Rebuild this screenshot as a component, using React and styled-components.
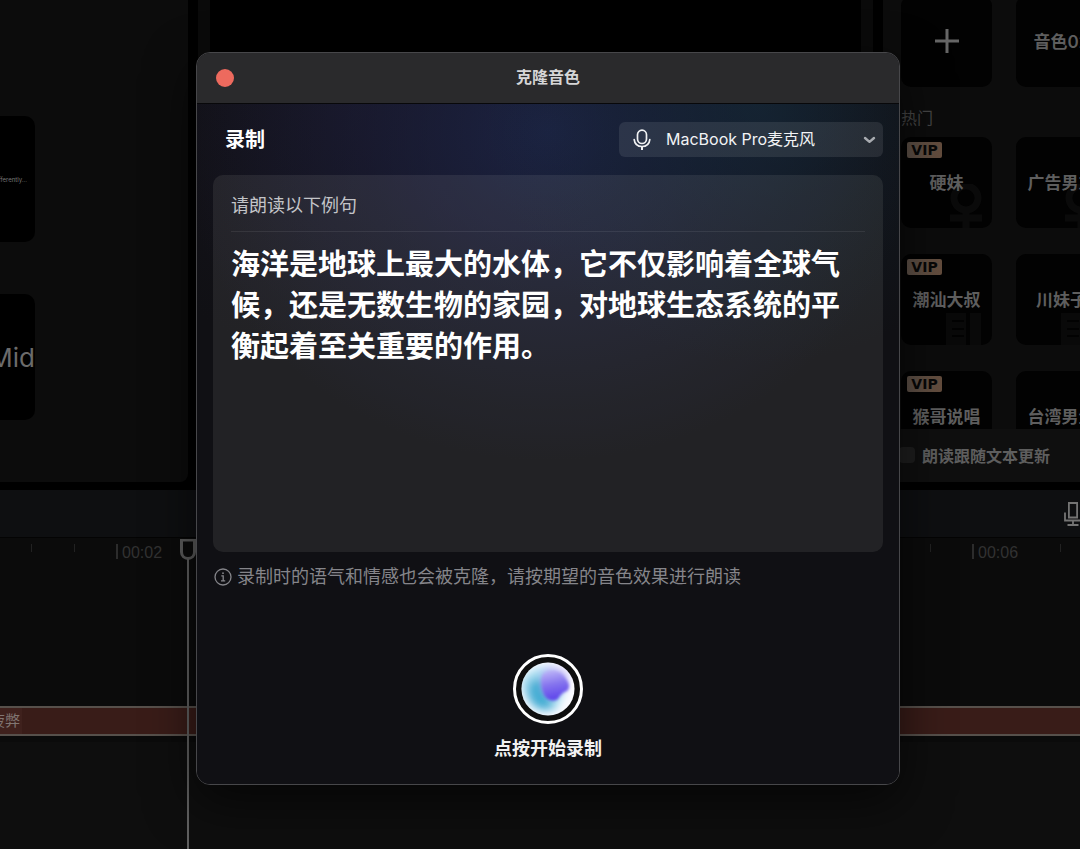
import { useState } from 'react'
import styled, { createGlobalStyle, css } from 'styled-components'

const GlobalStyle = createGlobalStyle`
  * {
    box-sizing: border-box;
  }
  body {
    margin: 0;
    background: #000;
    color: #fff;
    font-family: Inter, 'Noto Sans CJK SC', sans-serif;
    font-size: 16px;
  }
  button,
  select {
    font-family: inherit;
  }
`

/* editor shell */

const Page = styled.div`
  position: relative;
  display: flex;
  flex-direction: column;
  height: 100vh;
  overflow: hidden;
`

const Workspace = styled.main`
  display: grid;
  grid-template-columns: 188px 1fr 197px;
  gap: 10px;
  height: 482px;
  flex-shrink: 0;
`

const MediaPanel = styled.section`
  display: flex;
  flex-direction: column;
  gap: 52px;
  padding-top: 116px;
  background: #0c0c0c;
  border-bottom-right-radius: 8px;
`

const Thumb = styled.div`
  display: flex;
  align-items: center;
  justify-content: flex-end;
  width: 35px;
  height: 126px;
  padding-right: ${(props) => (props.$large ? 0 : '8px')};
  border-radius: 0 10px 10px 0;
  overflow: hidden;
  background: #000;
  color: ${(props) => (props.$large ? '#6b6b6b' : '#777')};
  font-size: ${(props) => (props.$large ? '26px' : '6px')};
  white-space: nowrap;
`

const Preview = styled.section`
  padding: 0 12px;
  background: #0a0a0a;
`

const Screen = styled.div`
  height: 100%;
  background: #000;
`

const VoicePanel = styled.section`
  display: flex;
  flex-direction: column;
  background: #0c0c0c;
  overflow: hidden;
`

const VoiceList = styled.div`
  flex: 1;
  min-height: 0;
  overflow: hidden;
`

const VoiceScroll = styled.div`
  margin-top: -4px;
  padding-left: 18px;
`

const VoiceGrid = styled.div`
  display: grid;
  grid-template-columns: 91px 91px;
  gap: 26px 24px;
`

const GroupTitle = styled.h3`
  margin: 0;
  padding: 18px 0 6px;
  color: #454545;
  font-size: 16px;
  font-weight: 400;
  line-height: 26px;
`

const VoiceCard = styled.button`
  position: relative;
  display: flex;
  align-items: center;
  justify-content: center;
  height: 91px;
  padding: 0 0 2px;
  border: 0;
  border-radius: 10px;
  overflow: hidden;
  background: #020202;
  color: #5e5e5e;
  font-size: 17px;
  font-weight: 600;
  white-space: nowrap;
`

const VoiceName = styled.span`
  position: relative;
`

const VipBadge = styled.span`
  position: absolute;
  top: 5px;
  left: 6px;
  width: 35px;
  height: 16px;
  border-radius: 2px;
  background: linear-gradient(90deg, #5d5047, #644d3d);
  color: #080808;
  font-family: 'DejaVu Sans', sans-serif;
  font-size: 14px;
  font-weight: 700;
  line-height: 16px;
`

const Ghost = styled.svg`
  position: absolute;
  right: 8px;
  bottom: 0;
  width: 40px;
  height: 44px;
`

const VoiceFooter = styled.label`
  display: flex;
  align-items: center;
  gap: 7px;
  height: 53px;
  padding: 0 0 2px 16px;
  background: #0f0f0f;
  color: #5e5e5e;
  font-size: 16px;
  font-weight: 600;
  white-space: nowrap;
`

const FollowCheck = styled.input`
  appearance: none;
  width: 16px;
  height: 16px;
  margin: 0;
  border-radius: 4px;
  background: #1e1e1e;
`

/* timeline */

const Toolbar = styled.div`
  display: flex;
  align-items: center;
  justify-content: flex-end;
  height: 48px;
  margin-top: 8px;
  flex-shrink: 0;
  background: #0e0f11;
  border-bottom: 1px solid #040404;
  overflow: hidden;
`

const ToolButton = styled.button`
  display: flex;
  margin-right: -2px;
  padding: 0;
  border: 0;
  background: none;
  color: #747474;
`

const Timeline = styled.section`
  position: relative;
  flex: 1;
  display: flex;
  flex-direction: column;
  background: #0b0b0b;
  overflow: hidden;
`

const Ruler = styled.div`
  display: flex;
  height: 168px;
  padding-top: 6px;
  margin-left: -312px;
`

const Segment = styled.div`
  display: grid;
  grid-template-columns: repeat(10, 1fr);
  width: 428px;
  flex-shrink: 0;
`

const Tick = styled.span`
  height: 8px;
  border-left: 1px solid #222;
  ${(props) =>
    props.$major &&
    css`
      height: 15px;
      padding-left: 4px;
      border-left: 2px solid #2c2c2c;
      color: #323232;
      font-family: 'Liberation Sans', sans-serif;
      font-size: 16px;
      line-height: 17px;
    `}
  ${(props) => props.$hidden && 'border-color: transparent;'}
`

const Clip = styled.div`
  height: 30px;
  flex-shrink: 0;
  margin-left: -16px;
  background: #391c18;
  border-top: 2px solid #57504b;
  border-bottom: 2px solid #57504b;
  color: #817673;
  font-size: 15px;
  line-height: 26px;
`

const ClipLabel = styled.span`
  display: inline-block;
  padding: 0 2px 0 6px;
  background: #3f211d;
`

const EmptyTrack = styled.div`
  flex: 1;
  margin-top: 6px;
  background: #0e0e0e;
`

const Playhead = styled.svg`
  position: absolute;
  top: 1px;
  left: 180px;
  width: 16px;
  height: 100%;
`

/* dialog */

const Overlay = styled.div`
  position: absolute;
  inset: 0;
  display: flex;
  align-items: flex-start;
  justify-content: center;
  padding: 52px 0 0 16px;
`

const Dialog = styled.section`
  width: 704px;
  max-width: 100%;
  border: 1px solid #47474a;
  border-radius: 14px;
  overflow: hidden;
  background: #101014;
  box-shadow: 0 16px 50px rgba(0, 0, 0, 0.6);
`

const DialogHeader = styled.header`
  display: grid;
  grid-template-columns: 1fr auto 1fr;
  align-items: center;
  height: 51px;
  padding: 0 19px;
  background: #2a2a2c;
  border-bottom: 1px solid #08080a;
`

const CloseButton = styled.button`
  width: 18px;
  height: 18px;
  padding: 0;
  border: 0;
  border-radius: 50%;
  background: #ed6a5e;
`

const DialogTitle = styled.h1`
  margin: 0;
  padding-bottom: 2px;
  color: #d6d6d7;
  font-size: 16px;
  font-weight: 600;
  line-height: 24px;
`

const DialogBody = styled.div`
  display: flex;
  flex-direction: column;
  padding: 18px 16px 22px;
  background:
    radial-gradient(
      ellipse 280px 260px at 80% 0,
      rgba(20, 48, 62, 0.5),
      rgba(20, 44, 58, 0.22) 50%,
      transparent
    ),
    radial-gradient(
      ellipse 370px 330px at 50% 4%,
      rgba(31, 40, 80, 0.75),
      rgba(31, 36, 76, 0.36) 50%,
      transparent
    ),
    radial-gradient(ellipse 260px 260px at 22% 0, rgba(30, 25, 44, 0.4), transparent),
    #101014;
`

const TopRow = styled.div`
  display: flex;
  align-items: center;
  justify-content: space-between;
  padding-left: 12px;
  margin-bottom: 18px;
`

const SectionTitle = styled.h2`
  margin: 0;
  font-size: 20px;
  font-weight: 600;
  line-height: 26px;
`

const DeviceField = styled.label`
  display: flex;
  align-items: center;
  gap: 15px;
  width: 264px;
  height: 35px;
  padding: 0 7px 0 14px;
  border-radius: 6px;
  background: rgba(255, 255, 255, 0.09);
`

const DeviceSelect = styled.select`
  appearance: none;
  flex: 1;
  min-width: 0;
  padding: 0 0 2px;
  border: 0;
  outline: 0;
  background: none;
  color: #f2f3f5;
  font-size: 16px;
  line-height: 24px;
`

const ScriptCard = styled.div`
  min-height: 377px;
  padding: 18px 18px;
  border-radius: 10px;
  background: rgba(255, 255, 240, 0.08);
`

const ScriptHint = styled.div`
  padding-bottom: 12px;
  border-bottom: 1px solid rgba(255, 255, 255, 0.08);
  color: #c3c4c8;
  font-size: 18px;
  line-height: 26px;
`

const ScriptText = styled.p`
  margin: 12px 0 0;
  font-size: 29px;
  font-weight: 600;
  line-height: 41px;
`

const Tip = styled.div`
  display: flex;
  align-items: center;
  gap: 5px;
  margin-top: 12px;
  padding-left: 1px;
  color: #85858a;
  font-size: 18px;
  line-height: 26px;
`

const Recorder = styled.div`
  display: flex;
  flex-direction: column;
  align-items: center;
  gap: 12px;
  margin-top: 64px;
`

const RecordButton = styled.button`
  display: flex;
  align-items: center;
  justify-content: center;
  width: 70px;
  height: 70px;
  padding: 0;
  border: 3px solid #fff;
  border-radius: 50%;
  background: #0e0e0e;
`

const RecordLabel = styled.div`
  color: #f2f2f2;
  font-size: 18px;
  font-weight: 600;
  line-height: 26px;
`

const MicIcon = () => (
  <svg width='18' height='22' viewBox='0 0 18 22' fill='none' stroke='#f0f1f3' strokeWidth='1.7'>
    <rect x='4.500' y='1.2' width='9' height='13.3' rx='4.500' />
    <path d='M1.2 10.6c.5 4.3 3.5 6.9 7.8 6.9s7.300-2.600 7.800-6.900' strokeLinecap='round' />
    <path d='M9 17.500v3.500' strokeWidth='2' />
  </svg>
)

const ChevronIcon = () => (
  <svg width='13' height='8' viewBox='0 0 13 8' fill='none' stroke='#a8abb0' strokeWidth='2.400'>
    <path d='M2 2l4.500 3.800L11 2' strokeLinecap='round' strokeLinejoin='round' />
  </svg>
)

const InfoIcon = () => (
  <svg width='18' height='18' viewBox='0 0 18 18' fill='none' stroke='currentColor' strokeWidth='1.300'>
    <circle cx='9' cy='9' r='8' />
    <path d='M7.300 7.800h1.900v5M7 12.900h4.200' />
    <circle cx='9' cy='5.200' r='0.900' fill='currentColor' stroke='none' />
  </svg>
)

const PlusIcon = () => (
  <svg width='24' height='24' viewBox='0 0 24 24' stroke='#666' strokeWidth='3'>
    <path d='M12 0v24M0 12h24' />
  </svg>
)

const ToolMicIcon = () => (
  <svg width='18' height='24' viewBox='0 0 18 24' fill='none' stroke='currentColor' strokeWidth='1.800'>
    <path d='M4.900 1h8.200v14.500H4.900z' />
    <path d='M1 10.500v8h16v-8M9 18.500v4.300M3.500 23h11' />
  </svg>
)

const OrbIcon = () => (
  <svg width='54' height='54' viewBox='0 0 54 54'>
    <defs>
      <clipPath id='orb'>
        <circle cx='27' cy='27' r='26.500' />
      </clipPath>
      <filter id='haze' x='-50%' y='-50%' width='200%' height='200%'>
        <feGaussianBlur stdDeviation='4' />
      </filter>
      <filter id='soft' x='-50%' y='-50%' width='200%' height='200%'>
        <feGaussianBlur stdDeviation='1.600' />
      </filter>
      <linearGradient id='violet' x1='0.300' y1='0' x2='0.500' y2='1'>
        <stop offset='0' stopColor='#b9b0f7' />
        <stop offset='0.450' stopColor='#8574ee' />
        <stop offset='1' stopColor='#5a40ea' />
      </linearGradient>
    </defs>
    <g clipPath='url(#orb)'>
      <rect width='54' height='54' fill='#fbfbff' />
      <g filter='url(#haze)'>
        <path d='M0 20C6 8 20 3 34 5l10 22-8 20C22 54 3 46 0 20z' fill='#a5dcf0' />
        <path d='M7 24c4-8 12-10 18-4l7 26c-14 6-27-4-25-22z' fill='#45aed4' />
        <path d='M22 8c8-4 20-2 25 6l-4 14-20 2z' fill='#b4adf5' />
      </g>
      <path
        d='M22 12c8-5 19-3 23 5 4 5 4 9 1 12-4 1-7 4-9 8-4 3-11 2-14-4-3-7-4-16-1-21z'
        fill='url(#violet)'
        filter='url(#soft)'
      />
    </g>
  </svg>
)

const GhostArt = ({ kind }) => (
  <Ghost viewBox='0 0 40 44' fill='none' stroke='#0a0a0a'>
    {kind === 'female' ? (
      <g strokeWidth='7'>
        <circle cx='22' cy='14' r='12' />
        <path d='M22 26v18M6 34h32' />
      </g>
    ) : (
      <g fill='#090909' stroke='none'>
        <path d='M2 12h20v32H2zM26 12h11v32H26z' />
        <path d='M8 19h12v2H8zM8 27h12v2H8zM8 34h12v2H8z' fill='#020202' />
      </g>
    )}
  </Ghost>
)

const voices = [
  { name: '硬妹', vip: true, ghost: 'female' },
  { name: '广告男友', ghost: 'female' },
  { name: '潮汕大叔', vip: true, ghost: 'books' },
  { name: '川妹子', ghost: 'books' },
  { name: '猴哥说唱', vip: true },
  { name: '台湾男生' },
]

const marks = ['00:00', '00:02', '00:04', '00:06']

function Editor() {
  return (
    <>
      <Workspace>
        <MediaPanel>
          <Thumb>differently...</Thumb>
          <Thumb $large>Mid</Thumb>
        </MediaPanel>
        <Preview>
          <Screen />
        </Preview>
        <VoicePanel>
          <VoiceList>
            <VoiceScroll>
              <VoiceGrid>
                <VoiceCard aria-label='克隆音色'>
                  <PlusIcon />
                </VoiceCard>
                <VoiceCard>音色02</VoiceCard>
              </VoiceGrid>
              <GroupTitle>热门</GroupTitle>
              <VoiceGrid>
                {voices.map((voice) => (
                  <VoiceCard key={voice.name}>
                    {voice.ghost && <GhostArt kind={voice.ghost} />}
                    {voice.vip && <VipBadge>VIP</VipBadge>}
                    <VoiceName>{voice.name}</VoiceName>
                  </VoiceCard>
                ))}
              </VoiceGrid>
            </VoiceScroll>
          </VoiceList>
          <VoiceFooter>
            <FollowCheck type='checkbox' />
            朗读跟随文本更新
          </VoiceFooter>
        </VoicePanel>
      </Workspace>
      <Toolbar>
        <ToolButton aria-label='录音'>
          <ToolMicIcon />
        </ToolButton>
      </Toolbar>
      <Timeline>
        <Ruler>
          {marks.map((mark) => (
            <Segment key={mark}>
              <Tick $major>{mark}</Tick>
              {/* the first minor tick would run into the time */}
              <Tick $hidden />
              {[2, 3, 4, 5, 6, 7, 8, 9].map((n) => (
                <Tick key={n} />
              ))}
            </Segment>
          ))}
        </Ruler>
        <Clip>
          <ClipLabel>疲弊</ClipLabel>
        </Clip>
        <EmptyTrack />
        <Playhead fill='none' stroke='#606060' strokeWidth='2'>
          <path d='M1.500 1h13v12c0 4-3 6.500-6.500 6.500S1.500 17 1.500 13z' strokeWidth='3' stroke='#5c5c5c' />
          <path d='M8 20v400' />
        </Playhead>
      </Timeline>
    </>
  )
}

function CloneDialog() {
  const [device, setDevice] = useState('macbook')

  return (
    <Overlay>
      <Dialog role='dialog' aria-labelledby='clone-title'>
        <DialogHeader>
          <CloseButton aria-label='关闭' />
          <DialogTitle id='clone-title'>克隆音色</DialogTitle>
        </DialogHeader>
        <DialogBody>
          <TopRow>
            <SectionTitle>录制</SectionTitle>
            <DeviceField>
              <MicIcon />
              <DeviceSelect aria-label='麦克风' value={device} onChange={(event) => setDevice(event.target.value)}>
                <option value='macbook'>MacBook Pro麦克风</option>
              </DeviceSelect>
              <ChevronIcon />
            </DeviceField>
          </TopRow>
          <ScriptCard>
            <ScriptHint>请朗读以下例句</ScriptHint>
            <ScriptText>
              海洋是地球上最大的水体，它不仅影响着全球气候，还是无数生物的家园，对地球生态系统的平衡起着至关重要的作用。
            </ScriptText>
          </ScriptCard>
          <Tip>
            <InfoIcon />
            录制时的语气和情感也会被克隆，请按期望的音色效果进行朗读
          </Tip>
          <Recorder>
            <RecordButton aria-labelledby='record-label'>
              <OrbIcon />
            </RecordButton>
            <RecordLabel id='record-label'>点按开始录制</RecordLabel>
          </Recorder>
        </DialogBody>
      </Dialog>
    </Overlay>
  )
}

function App() {
  return (
    <Page>
      <GlobalStyle />
      <Editor />
      <CloneDialog />
    </Page>
  )
}

export default App
